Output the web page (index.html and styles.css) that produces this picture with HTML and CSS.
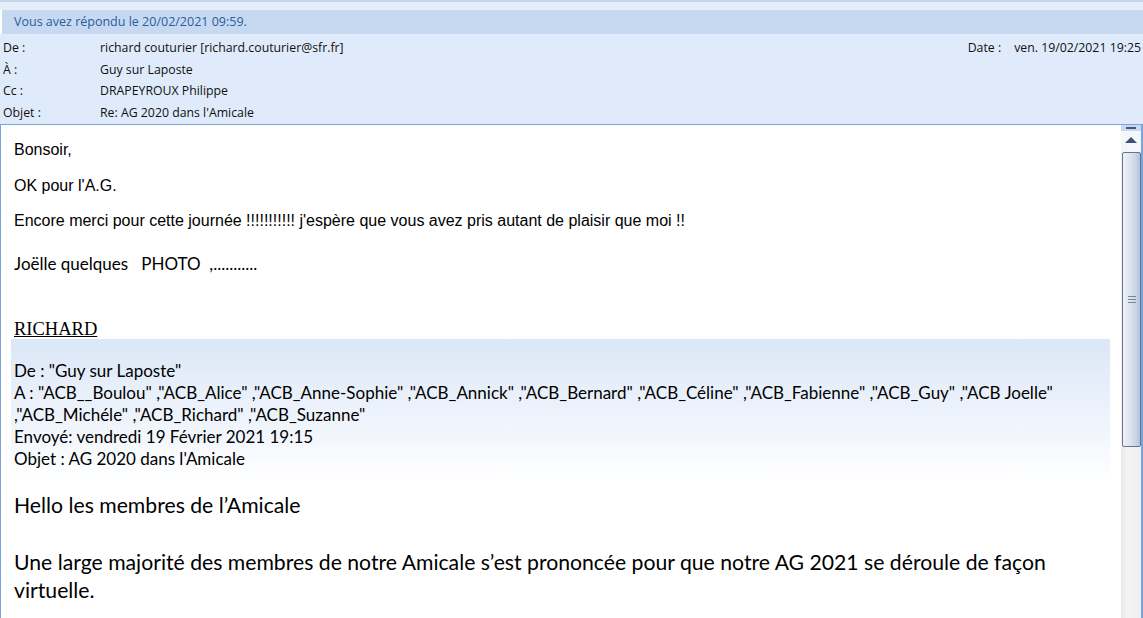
FILE: index.html
```html
<!DOCTYPE html>
<html lang="fr">
<head>
  <meta charset="UTF-8" />
  <title>Re: AG 2020 dans l'Amicale</title>
  <link rel="stylesheet" href="styles.css">
</head>
<body>

  <div class="top-strip"></div>
  <div class="reply-bar">Vous avez répondu le 20/02/2021 09:59.</div>

  <div class="headers">
    <div class="hrow">
      <span class="hlabel">De :</span>
      <span class="hval">richard couturier [richard.couturier@sfr.fr]</span>
      <span class="hdate"><span class="hdate-label">Date :</span>ven. 19/02/2021 19:25</span>
    </div>
    <div class="hrow">
      <span class="hlabel">À :</span>
      <span class="hval">Guy sur Laposte</span>
    </div>
    <div class="hrow">
      <span class="hlabel">Cc :</span>
      <span class="hval">DRAPEYROUX Philippe</span>
    </div>
    <div class="hrow">
      <span class="hlabel">Objet :</span>
      <span class="hval">Re: AG 2020 dans l'Amicale</span>
    </div>
  </div>

  <div class="reader">
    <div class="message">
      <p class="arial">Bonsoir,</p>
      <p class="arial">OK pour l'A.G.</p>
      <p class="arial">Encore merci pour cette journée !!!!!!!!!!! j'espère que vous avez pris autant de plaisir que moi !!</p>
      <p class="photo">Joëlle quelques &nbsp; PHOTO &nbsp;,...........</p>
      <p class="signature">RICHARD</p>

      <div class="quote">
        De : "Guy sur Laposte"<br>
        A : "ACB__Boulou" ,"ACB_Alice" ,"ACB_Anne-Sophie" ,"ACB_Annick" ,"ACB_Bernard" ,"ACB_Céline" ,"ACB_Fabienne" ,"ACB_Guy" ,"ACB Joelle"<br>
        ,"ACB_Michéle" ,"ACB_Richard" ,"ACB_Suzanne"<br>
        Envoyé: vendredi 19 Février 2021 19:15<br>
        Objet : AG 2020 dans l'Amicale
      </div>

      <p class="big hello">Hello les membres de l’Amicale</p>
      <p class="big lines">Une large majorité des membres de notre Amicale s’est prononcée pour que notre AG 2021 se déroule de façon<br>virtuelle.</p>
    </div>

    <div class="scrollbar">
      <div class="sb-cap"></div>
      <div class="sb-up"></div>
      <div class="sb-thumb"><div class="sb-grip"></div></div>
      <div class="sb-track"></div>
    </div>
  </div>

</body>
</html>
```

FILE: styles.css
```css
body {
  margin: 0;
  background: #fff;
  font-family: 'Open Sans', sans-serif;
  overflow: hidden;
}

.top-strip {
  height: 8px;
  background: #e6eefa;
  border-top: 2px solid #c3d6ee;
}

.reply-bar {
  height: 24px;
  line-height: 24px;
  margin-left: 2px;
  padding-left: 12px;
  background: #c6d9f1;
  color: #2b5c9c;
  font-size: 12.5px;
}

.headers {
  height: 87px;
  padding-top: 3px;
  background: #dfebfa;
  color: #111;
  font-size: 12.3px;
}

.hrow {
  display: flex;
  height: 21.5px;
  line-height: 21.5px;
}

.hlabel {
  width: 97px;
  padding-left: 3px;
}

.hval {
  flex: 1;
}

.hdate {
  padding-right: 2px;
}

.hdate-label {
  margin-right: 13px;
}

/* zone de lecture */
.reader {
  display: flex;
  height: 493px;
  border-top: 1px solid #7aa4dc;
  border-left: 1px solid #7aa4dc;
  border-right: 2px solid #7aa4dc;
  overflow: hidden;
}

.message {
  flex: 1;
  padding: 16px 11px 0 13px;
  color: #000;
}

.message p {
  margin: 0;
}

.arial {
  font-family: 'Liberation Sans', Arial, sans-serif;
  font-size: 16px;
  line-height: 18px;
  margin-bottom: 17.5px !important;
}

.photo {
  font-family: Lato, sans-serif;
  font-size: 17px;
  line-height: 18px;
  margin-top: 25px !important;
}

.signature {
  font-family: 'Liberation Serif', 'Times New Roman', serif;
  font-size: 18.5px;
  line-height: 20px;
  text-decoration: underline;
  margin-top: 46px !important;
}

.quote {
  margin-left: -3px;
  padding: 21px 0 12px 3px;
  font-family: Lato, sans-serif;
  font-size: 17px;
  line-height: 22px;
  background: linear-gradient(to bottom, #dbe7f7, #f3f7fd 70%, #fff);
}

.big {
  font-family: Lato, sans-serif;
  font-size: 21.2px;
}

.hello {
  line-height: 24px;
  margin-top: 11px !important;
}

.lines {
  line-height: 28px;
  margin-top: 31px !important;
}

/* barre de défilement */
.scrollbar {
  width: 20px;
  display: flex;
  flex-direction: column;
  background: #f0f0f0;
}

.sb-cap {
  height: 6px;
  background: #c7d8ef;
  position: relative;
}

.sb-cap::after {
  content: "";
  position: absolute;
  left: 5px;
  right: 5px;
  top: 2px;
  height: 2px;
  background: #46577c;
}

.sb-up {
  height: 21px;
  position: relative;
  background: #f4f6fa;
}

.sb-up::after {
  content: "";
  position: absolute;
  left: 4px;
  top: 6px;
  border-left: 6px solid transparent;
  border-right: 6px solid transparent;
  border-bottom: 6px solid #3f5078;
}

.sb-thumb {
  height: 293px;
  margin: 0 0 0 1px;
  border: 1px solid #63749b;
  border-radius: 2px;
  background: linear-gradient(to right, #eef1f6, #dde3ed 45%, #c9d4e5 75%, #b3c2da);
  display: flex;
  align-items: center;
  justify-content: center;
}

.sb-grip {
  width: 8px;
  height: 5px;
  border-top: 1px solid #7a8499;
  border-bottom: 1px solid #7a8499;
  position: relative;
}

.sb-grip::after {
  content: "";
  position: absolute;
  left: 0;
  right: 0;
  top: 2px;
  height: 1px;
  background: #7a8499;
}

.sb-track {
  flex: 1;
  background: linear-gradient(to right, #e9e9e9, #f4f4f4 30%, #f0f0f0);
}
```
